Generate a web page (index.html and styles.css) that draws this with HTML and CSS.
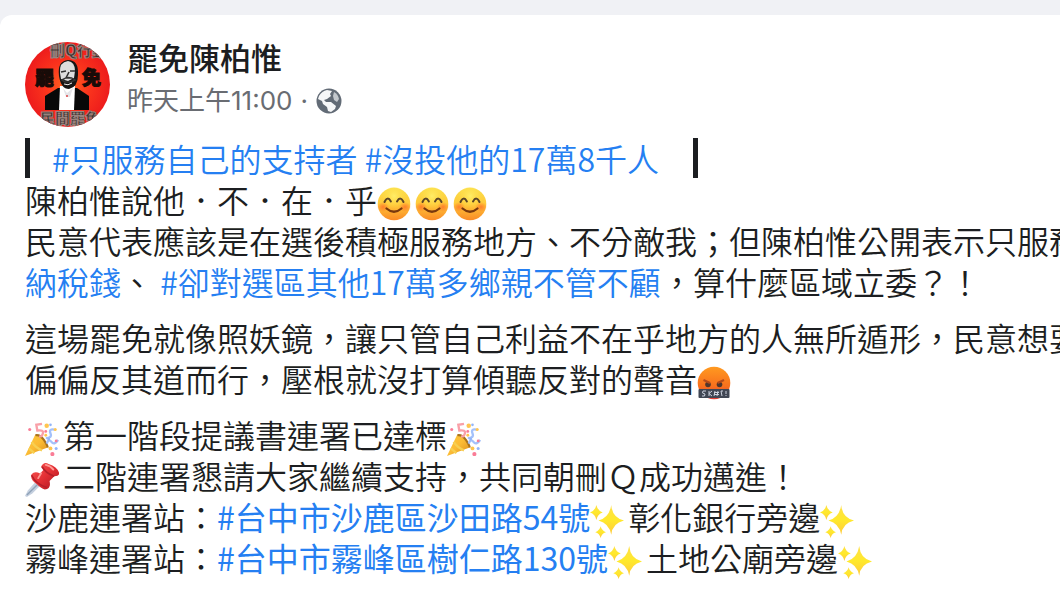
FILE: index.html
```html
<!DOCTYPE html>
<html lang="zh-Hant">
<head>
<meta charset="utf-8">
<meta name="viewport" content="width=device-width, initial-scale=1">
<title>罷免陳柏惟</title>
<link rel="stylesheet" href="styles.css">
</head>
<body>
<svg class="sprite" aria-hidden="true">
  <defs>
    <linearGradient id="face" x2="0" y2="1"><stop offset="0" stop-color="#fbe04c"/><stop offset=".5" stop-color="#ffc93a"/><stop offset="1" stop-color="#fa8a26"/></linearGradient>
    <radialGradient id="glow" cy=".35"><stop offset="0" stop-color="#ffee68"/><stop offset="1" stop-color="#ffda40" stop-opacity="0"/></radialGradient>
    <radialGradient id="cheek"><stop offset="0" stop-color="#ff7028" stop-opacity=".8"/><stop offset="1" stop-color="#ff7028" stop-opacity="0"/></radialGradient>
    <linearGradient id="rage" x2="0" y2="1"><stop offset="0" stop-color="#ff9a20"/><stop offset=".6" stop-color="#f8701d"/><stop offset="1" stop-color="#e43f38"/></linearGradient>
    <linearGradient id="cone" x2="1" y2="1"><stop offset="0" stop-color="#ffc83c"/><stop offset=".5" stop-color="#fbbb34"/><stop offset="1" stop-color="#d98a18"/></linearGradient>
    <linearGradient id="pinhead" x2="1" y2="1"><stop offset="0" stop-color="#fa5a55"/><stop offset=".5" stop-color="#e32f34"/><stop offset="1" stop-color="#a91520"/></linearGradient>
    <linearGradient id="star" x2="0" y2="1"><stop offset="0" stop-color="#ffe04a"/><stop offset=".5" stop-color="#ffe92c"/><stop offset="1" stop-color="#ffc83e"/></linearGradient>
  </defs>
  <symbol id="smile" viewBox="0 0 34 34">
    <circle cx="17" cy="17" r="16.3" fill="url(#face)"/>
    <circle cx="17" cy="13" r="13" fill="url(#glow)"/>
    <ellipse cx="6" cy="20" rx="6" ry="5" fill="url(#cheek)"/><ellipse cx="28" cy="20" rx="6" ry="5" fill="url(#cheek)"/>
    <path d="M7.500 15q3-6.500 6.400-.5M20 14.500q3.400-6 6.500.5" fill="none" stroke="#5b4527" stroke-width="2" stroke-linecap="round"/>
    <path d="M9.500 21.500Q17 28 24.500 21.500" fill="none" stroke="#78380e" stroke-width="2.300" stroke-linecap="round"/>
  </symbol>
  <symbol id="angry" viewBox="0 0 34 34">
    <circle cx="17" cy="17" r="16.300" fill="url(#rage)"/>
    <circle cx="11" cy="18.500" r="2.800" fill="#51362c"/><circle cx="22.500" cy="18.500" r="2.800" fill="#51362c"/>
    <path d="M6.500 14l6.500 3M27 14l-6.500 3" stroke="#b34a1c" stroke-width="2"/>
    <rect x="1.500" y="23" width="31" height="9" rx="1" fill="#414754"/>
    <path d="M9 25H6l-.5 2 2.500 1-.5 2H5M12 25v5m3-5l-3 2.500 3 2.500M18 25l-1 5m4-5l-1 5m-3-3.500h5m-5 2h5M26 25h-2l1 5m4-5v3m0 1v1" fill="none" stroke="#cbd0dc" stroke-width="1"/>
  </symbol>
  <symbol id="party" viewBox="0 0 36 36">
    <path d="M0 36L10.500 14Q14 12 20 19.500T24 27Z" fill="url(#cone)"/>
    <path d="M4 28l6 5M7 21q4 6 11 9" stroke="#f7cf52" stroke-width="2.500" fill="none"/>
    <path d="M11 14q5-1 9 5t4 8" fill="none" stroke="#a9721c" stroke-width="2.200"/>
    <path d="M18 2l-6 1 1 6q7-1 6 3t-4 3" fill="none" stroke="#f9a0a8" stroke-width="2.500"/>
    <path d="M31 8q-6-1-4 4t-5 5M23 23q2-6 5-2t7-2" fill="none" stroke="#a4c1fa" stroke-width="2.500"/>
    <g fill="#ffc550"><circle cx="23" cy="4" r="2.400"/><circle cx="32" cy="8" r="1.600"/><circle cx="27" cy="28" r="2"/><circle cx="22" cy="14" r="1.500"/></g>
    <g fill="#fa7c96"><circle cx="5" cy="8" r="1.600"/><circle cx="29" cy="34" r="2.200"/><circle cx="33" cy="20" r="1.500"/><circle cx="22" cy="10" r="1.500"/></g>
    <g fill="#92b5fa"><circle cx="27" cy="3" r="1.400"/><circle cx="33" cy="28" r="1.600"/><circle cx="25" cy="18" r="1.500"/></g>
  </symbol>
  <symbol id="pin" viewBox="0 0 36 36">
    <path d="M0 35l3-6 8-9 5 4-8 8-6 4Z" fill="#c5d0df"/><path d="M2 34l11-11" stroke="#8fa2b8" stroke-width="1.500"/>
    <path d="M17 4q3-6 8-3 9 3 11 9 1 4-5 4l-5 5q2 9-5 9-4-1-9-6-7-5-5-10 3-4 9-1l4-4Z" fill="url(#pinhead)"/>
    <path d="M18 4q4 7 13 10M7 13q4 9 16 13" fill="none" stroke="#b51f29" stroke-width="1.800"/>
    <path d="M17 11l-3 5M22 2q5 1 8 5" stroke="#ff9893" stroke-width="2" fill="none" stroke-linecap="round"/>
  </symbol>
  <symbol id="spark" viewBox="0 0 32 32">
    <g fill="url(#star)"><path d="M20 1Q21 13 32 15.500 21 18 20 29 18 18 8 15.500 18 13 20 1Z"/><path d="M6 1Q7 6 12 8 7 9.500 6 15 5 9.500 0 8 5 6 6 1Z"/><path d="M10 21q1 4 5 5.500-4 1-5 5.500-1-4.500-5-5.500 4-1.500 5-5.500Z"/></g>
  </symbol>
</svg>
<main class="post">
  <header class="head">
    <svg class="avatar" viewBox="0 0 85 85" role="img" aria-label="罷免陳柏惟">
      <defs><clipPath id="round"><circle cx="42.500" cy="42.500" r="42.500"/></clipPath><radialGradient id="red"><stop offset="0" stop-color="#ff681f"/><stop offset=".5" stop-color="#fb351d"/><stop offset="1" stop-color="#ed1c1c"/></radialGradient></defs>
      <g clip-path="url(#round)">
        <rect width="85" height="85" fill="url(#red)"/>
        <text class="avatar-band" x="25" y="14">刪Q行動</text>
        <text class="avatar-word" x="10" y="43">罷</text><text class="avatar-word" x="57" y="43">免</text>
        <path d="M20 68V54l13-8h19l12 8v14Z" fill="#080808"/>
        <path d="M35 44l-1 24h15l1-24Z" fill="#fff"/>
        <path d="M38 46l4 5 6-5-3 9h-4Z" fill="#e4e4e8"/><circle cx="42" cy="54" r="1" fill="#d44"/>
        <path d="M34 34q-2-15 9-16 11 0 10 15 0 12-9 14-8 0-10-13Z" fill="#161616"/>
        <path d="M35 31q-1-11 8-12 7 1 7 10l-1 7-6 3-7-2Z" fill="#ddd"/>
        <path d="M36 30l5-1m4 0h5M44 30l-3 6h6M37 38q7-5 13 0l-4 2h-6Z" fill="none" stroke="#333" stroke-width="1.600"/>
        <path d="M39 42q4 2 8-1" stroke="#eee" fill="none"/>
        <text class="avatar-band" x="15" y="82">民間罷免</text>
      </g>
    </svg>
    <div class="who">
      <h1 class="name">罷免陳柏惟</h1>
      <div class="meta"><time>昨天上午11:00</time><span>·</span>
        <svg class="globe" viewBox="0 0 26 26" role="img" aria-label="公開"><circle cx="13" cy="13" r="12.500" fill="#626b76"/><path d="M3 8Q6 3 11 2l5 1-2 3 1 2-4 3-3 1 2 2 5 0 5 4-1 3-4 3-3-1-1-4-4-3-1-3-4-2Z" fill="#f6f7f8"/><path d="M18 4q4 2 5 7l-2 3-3-2-1-4Z" fill="#c3c8cd"/></svg>
      </div>
    </div>
  </header>
  <article class="body">
    <p><span class="bar"></span><a href="#a">#只服務自己的支持者</a> <a href="#b">#沒投他的17萬8千人</a><span class="bar bar-end"></span><br>
    陳柏惟說他．不．在．乎<svg class="emoji" role="img" aria-label="😊"><use href="#smile"/></svg><svg class="emoji" role="img" aria-label="😊"><use href="#smile"/></svg><svg class="emoji" role="img" aria-label="😊"><use href="#smile"/></svg><br>
    民意代表應該是在選後積極服務地方、不分敵我；但陳柏惟公開表示只服務<br>
    <a href="#c">納稅錢</a>、 <a href="#d">#卻對選區其他17萬多鄉親不管不顧</a>，算什麼區域立委？！</p>
    <p>這場罷免就像照妖鏡，讓只管自己利益不在乎地方的人無所遁形，民意想要<br>
    偏偏反其道而行，壓根就沒打算傾聽反對的聲音<svg class="emoji" role="img" aria-label="🤬"><use href="#angry"/></svg></p>
    <p><svg class="emoji" role="img" aria-label="🎉"><use href="#party"/></svg>第一階段提議書連署已達標<svg class="emoji" role="img" aria-label="🎉"><use href="#party"/></svg><br>
    <svg class="emoji" role="img" aria-label="📌"><use href="#pin"/></svg>二階連署懇請大家繼續支持，共同朝刪Ｑ成功邁進！<br>
    沙鹿連署站：<a class="place" href="#e">#台中市沙鹿區沙田路54號</a><svg class="emoji" role="img" aria-label="✨"><use href="#spark"/></svg>彰化銀行旁邊<svg class="emoji" role="img" aria-label="✨"><use href="#spark"/></svg><br>
    霧峰連署站：<a class="place" href="#f">#台中市霧峰區樹仁路130號</a><svg class="emoji" role="img" aria-label="✨"><use href="#spark"/></svg>土地公廟旁邊<svg class="emoji" role="img" aria-label="✨"><use href="#spark"/></svg></p>
  </article>
</main>
</body>
</html>
```
FILE: styles.css
```css
* { box-sizing: border-box; }
body {
  margin: 0;
  padding-top: 15px;
  background: #f0f1f5;
  color: #1c1e21;
  font-family: "Noto Sans CJK TC", sans-serif;
  overflow: hidden;
}
.sprite { position: absolute; width: 0; height: 0; }
.post {
  min-height: calc(100vh - 15px);
  padding: 27px 0 0 25px;
  background: #fff;
  border-radius: 12px 0 0 0;
  overflow: hidden;
}
.head { display: flex; align-items: flex-start; gap: 17px; }
.avatar { width: 85px; height: 85px; flex: none; }
.avatar-band { font: 900 15px "Noto Sans CJK TC", sans-serif; fill: #3c3030; stroke: #98847e; stroke-width: 1px; }
.avatar-word { font: 900 19px "Noto Sans CJK TC", sans-serif; fill: #180b08; stroke: #180b08; stroke-width: 1px; }
.name { margin: 0 0 9px; font-size: 31px; line-height: 30px; font-weight: 500; }
.meta {
  display: flex;
  align-items: center;
  gap: 8px;
  font-family: Inter, "Noto Sans CJK TC", sans-serif;
  font-size: 26px;
  line-height: 40px;
  color: #696c72;
}
.globe { width: 26px; height: 26px; }
.body { padding-top: 11px; }
.body p {
  margin: 0 0 15px;
  font-size: 32px;
  line-height: 41px;
  font-weight: 350;
  white-space: nowrap;
}
a { color: #257ff2; text-decoration: none; }
.place { font-weight: 400; }
.bar {
  display: inline-block;
  width: 5px;
  height: 40px;
  margin-right: 22px;
  background: #1c1e21;
  vertical-align: -6px;
}
.bar-end { margin: 0 0 0 34px; }
.emoji { width: 38px; height: 34px; margin: -4px 0; padding-right: 4px; vertical-align: -4px; }
```
